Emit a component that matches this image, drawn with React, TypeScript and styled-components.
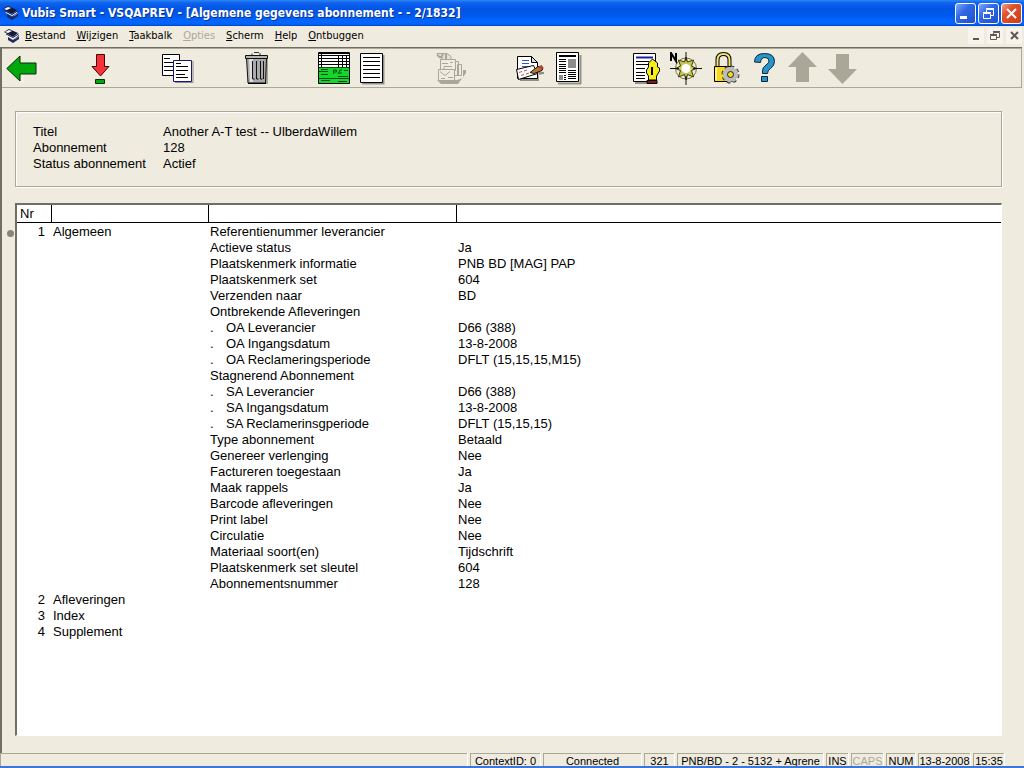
import React from 'react';
import styled, { createGlobalStyle } from 'styled-components';

const face = '#efebde';
const shade = '#aca899';

const Global = createGlobalStyle`
  *, *::before, *::after { box-sizing: border-box; }
  body { margin: 0; background: ${face}; font-family: "Liberation Sans", Arial, sans-serif; font-size: 13px; line-height: 16px; color: #000; }
  button { font: inherit; color: inherit; }
`;

const Window = styled.div`
  display: flex;
  flex-direction: column;
  min-height: 100vh;
  background: ${face};
`;

const TitleBar = styled.header`
  display: flex;
  align-items: center;
  height: 26px;
  padding: 0 2px 0 3px;
  gap: 3px;
  background: linear-gradient(#2a86f8 0, #0f62ee 3px, #0054e3 9px, #0058ee 15px, #0366ff 21px, #0264fa 24px, #0042c8 26px);
`;

const Title = styled.h1`
  flex: 1;
  margin: 0;
  font: bold 12px/20px "DejaVu Sans Condensed", Tahoma, sans-serif;
  color: #fff;
  text-shadow: 1px 1px #0a318c;
  white-space: nowrap;
`;

const TitleButtons = styled.div`
  display: flex;
  gap: 2px;
`;

const TitleButton = styled.button<{ $close?: boolean }>`
  width: 21px;
  height: 21px;
  padding: 0;
  border: 1px solid #fff;
  border-radius: 3px;
  background: ${p => (p.$close ? 'linear-gradient(135deg, #f0a088, #e2502c 35%, #c8401c)' : 'linear-gradient(135deg, #7fa8f8, #3168e4 40%, #1e50cc)')};
  svg { display: block; }
`;

const MenuBar = styled.nav`
  display: flex;
  align-items: center;
  height: 21px;
  padding: 0 2px 2px 4px;
`;

const MenuList = styled.div`
  display: flex;
  flex: 1;
  gap: 11px;
  padding-left: 5px;
`;

const MenuItem = styled.button`
  padding: 0;
  border: 0;
  background: none;
  font: 11px/16px "DejaVu Sans Condensed", Tahoma, sans-serif;
  &:disabled { color: ${shade}; }
`;

const ChildButton = styled.button`
  width: 16px;
  height: 16px;
  margin-left: 3px;
  padding: 0;
  border: 0;
  background: #f6f4ec;
  svg { display: block; }
`;

const Frame = styled.main`
  display: flex;
  flex-direction: column;
  flex: 1;
  border: solid #716f64;
  border-width: 1px 0 0 2px;
  margin-right: 2px;
`;

const Toolbar = styled.div`
  display: grid;
  grid-template-columns: repeat(22, 39px);
  height: 40px;
  padding-left: 1px;
  border: 1px solid ${shade};
  border-left: 0;
`;

const Tool = styled.button<{ $slot: number }>`
  grid-row: 1;
  grid-column: ${p => p.$slot};
  padding: 3px;
  border: 0;
  background: none;
  svg { display: block; }
`;

const Summary = styled.section`
  margin: 23px 20px 0 13px;
  padding: 12px 17px 14px;
  border: 1px solid ${shade};
  box-shadow: 1px 1px #fff, inset 1px 1px #fff;
`;

const Facts = styled.dl`
  display: grid;
  grid-template-columns: 130px 1fr;
  margin: 0;
  min-height: 48px;
  dt, dd { margin: 0; }
`;

const Body = styled.div`
  display: flex;
  flex: 1;
  margin: 16px 20px 17px 0;
`;

const Gutter = styled.div`
  width: 13px;
  padding: 27px 0 0 5px;
`;

const Marker = styled.div`
  width: 7px;
  height: 7px;
  border-radius: 50%;
  background: #87857a;
`;

const List = styled.div`
  flex: 1;
  background: #fff;
  border: solid #716f64;
  border-width: 2px 1px 1px 2px;
  border-right-color: #fff;
  border-bottom-color: #fff;
`;

const Table = styled.table`
  width: 100%;
  table-layout: fixed;
  border-collapse: separate;
  border-spacing: 0;
  tbody::before { content: ""; display: table-row; height: 1px; }
`;

const Head = styled.th<{ $width?: number }>`
  width: ${p => (p.$width ? `${p.$width}px` : 'auto')};
  height: 18px;
  padding: 0 3px;
  border-bottom: 1px solid #000;
  border-right: ${p => (p.$width ? '1px solid #000' : '0')};
  font-weight: normal;
  text-align: left;
`;

const Cell = styled.td<{ $number?: boolean }>`
  height: 16px;
  padding: ${p => (p.$number ? '0 7px 0 0' : '0 1px')};
  text-align: ${p => (p.$number ? 'right' : 'left')};
  white-space: nowrap;
`;

const Sub = styled.span`
  display: inline-block;
  width: 16px;
`;

const StatusBar = styled.footer`
  display: flex;
  gap: 3px;
  height: 15px;
  padding-right: 20px;
  border-bottom: 2px solid #3b77d8;
  font-size: 11px;
  line-height: 14px;
  overflow: hidden;
`;

const StatusCell = styled.div<{ $width?: number; $off?: boolean }>`
  flex: ${p => (p.$width ? `0 0 ${p.$width}px` : '1 1 0')};
  border: solid ${shade};
  border-width: 1px 0 0 1px;
  box-shadow: 1px 0 #fff;
  color: ${p => (p.$off ? shade : '#000')};
  text-align: center;
  white-space: nowrap;
`;

const AppIcon = () => (
  <svg width="16" height="16" viewBox="0 0 16 16">
    <path d="M0 4l5-3 9 4-5 4z" fill="#161a3c" />
    <path d="M1 4l4-2 3 1-4 2z" fill="#fff" />
    <path d="M2 6l7 3 5-3v2l-5 3-6-3z" fill="#f4f6fc" />
    <path d="M2 6l7 3.500L14.500 6" fill="none" stroke="#161a3c" />
    <path d="M4 9l5 3 6-5v4l-6 4-5-3z" fill="#20285c" />
    <path d="M11 11l4-3" stroke="#7c98e0" />
  </svg>
);

const lines = (x1: number, x2: number, ys: number[]) => ys.map(y => `M${x1} ${y}H${x2}`).join('');

const icons: Record<string, React.ReactNode> = {
  back: (
    <>
      <path d="M17 31V22H33V12" fill="none" stroke="#fff" strokeOpacity=".6" />
      <path d="M.8 16.500L14 4v7h16v11H14v7z" fill="#00a80c" stroke="#042d04" />
    </>
  ),
  download: (
    <>
      <path d="M12.500 2.500h8v12h4.500L16.500 24 8 14.500h4.500z" fill="#f83038" stroke="#3a0808" />
      <path d="M11.500 27.500h9v4h-9z" fill="#00a80c" stroke="#042d04" />
    </>
  ),
  copy: (
    <>
      <path d="M.500 2.500h17v21H.500z" fill="#fff" stroke="#000" />
      <path d={lines(2, 8, [6.5]) + lines(2, 14, [10.5, 14.5, 18.5])} stroke="#000" />
      <path d="M13 30.500h18V9" fill="none" stroke="#8d8b96" />
      <path d="M11.500 8.500h18v21h-18z" fill="#fff" stroke="#18186c" />
      <path d={lines(14, 19, [11.5]) + lines(14, 26, [14.5, 18.5, 25.5]) + lines(14, 23, [22.5])} stroke="#000" />
    </>
  ),
  trash: (
    <>
      <path d="M27 6v25H9" fill="none" stroke="#aaa79a" strokeWidth="2" />
      <path d="M6.500 6h20l-1 25H8z" fill="#aaa" stroke="#111" />
      <path d="M9 7h4v23h-3z" fill="#ddd" />
      <path d="M12.500 9v18M12.500 27h2M16.500 9v18M16.500 27h2M20.500 9v18M20.500 27h2M23.500 9v18" fill="none" stroke="#111" />
      <path d="M5.500 3.500h22v3h-22z" fill="#b6b6b6" stroke="#111" />
      <path d="M12 3V1.500M14 .500h5M20 1v2" stroke="#333" fill="none" />
      <path d="M8 31.500h18" stroke="#000" />
    </>
  ),
  grid: (
    <>
      <path d="M.500.500h31v15H.500z" fill="#fff" />
      <path d="M.500 15.500h31v16H.500z" fill="#14d62c" />
      <path d={lines(1, 31, [3.5, 6.5, 9.5, 12.5]) + 'M3.500 1v14M20.500 3v12M24.500 3v12M28.500 3v12M1 1.500h30'} stroke="#000" />
      <path d={lines(1, 31, [15.5, 26.5]) + lines(1, 10, [19.5]) + lines(3, 10, [17.5, 22.5]) + lines(20, 30, [24.5]) + lines(3, 12, [28.5]) + lines(20, 29, [29.5])} stroke="#064d0c" />
      <path d="M15.500 22v-4h3v2h-3M20 22l2-4h2M21 21h3M26 18.500h4" fill="none" stroke="#064d0c" />
      <path d="M.500.500h31v31H.500z" fill="none" stroke="#000" />
    </>
  ),
  list: (
    <>
      <path d="M5 31.500h21.500V3" fill="none" stroke="#96948a" strokeWidth="2" />
      <path d="M3.500 1.500h22v29h-22z" fill="#fff" stroke="#000" />
      <path d={lines(6, 23, [5.5, 9.5, 13.5, 17.5, 21.5, 25.5])} stroke="#000" />
    </>
  ),
  cards: (
    <>
      <path d="M2 28l4 4h17l8-11v-3h-3v8l-6 2z" fill="#aaa799" />
      <path d="M2 1.500h10l4 3v4H7V5H4z" fill="#e5e2d5" stroke="#aaa799" />
      <path d="M2 3l4 3M8 2l-2 4M11 2v5" stroke="#aaa799" strokeWidth="2" />
      <path d="M22.500 12.500h4v11h-4zM18.500 9.500h5v14h-5z" fill="#efebde" stroke="#aaa799" />
      <path d="M5.500 7.500h15v11h-15z" fill="#efebde" stroke="#aaa799" />
      <path d="M3.500 17.500h16v11h-16z" fill="#efebde" stroke="#aaa799" />
      <path d="M7 11.500h6M15 10.500h3M9 14.500h8M5 19.500l5 4 5-4M6 26.500h4M13 25.500h5M9 15v3" fill="none" stroke="#aaa799" />
    </>
  ),
  edit: (
    <>
      <path d="M7 27h17v-4l7-1v-2h-4l-2-5 1 14H7z" fill="#8f8d85" />
      <path d="M4.500 4.500h14l6 6v16h-20z" fill="#fff" stroke="#000" />
      <path d="M18.500 4.500v6h6z" fill="#ddd" stroke="#000" />
      <path d={lines(9, 16, [8.5, 11.5, 14.5])} stroke="#4054b8" />
      <path d="M3.500 17.500l17-4 4 8-19 6z" fill="#fff" stroke="#000" />
      <path d="M6 20.500l3-1M8 23.500l3-1M11 19l3-1M13 22l3-1" stroke="#d44860" />
      <path d="M17 20.500l8-6 5 1-1 3-8 3z" fill="#b8783c" stroke="#201008" />
      <path d="M26 14l3-1 1 3-2 2z" fill="#c04030" />
    </>
  ),
  news: (
    <>
      <path d="M6 31.500h22.500V3" fill="none" stroke="#96948a" strokeWidth="2" />
      <path d="M4.500.500h22v29h-22z" fill="#fff" stroke="#000" />
      <path d="M7 4h17" stroke="#000" strokeWidth="2" />
      <path d={lines(7, 14, [7.5, 9.5, 12.5, 14.5, 16.5, 18.5, 20.5]) + lines(16, 24, [18.5, 20.5, 22.5, 24.5, 26.5]) + lines(12, 14, [23.5, 25.5, 27.5])} stroke="#000" />
      <path d="M16 7h8v9h-8zM7 23h4v5H7z" fill="#8c8c8c" />
    </>
  ),
  compose: (
    <>
      <path d="M5 31h18" stroke="#96948a" strokeWidth="2" />
      <path d="M3.500 1.500h22v28h-22z" fill="#fff" stroke="#000" />
      <path d="M6 5.500h17" stroke="#1c20a8" strokeWidth="2" />
      <path d={lines(6, 19, [9.5, 12.5]) + lines(6, 15, [16.5, 20.5, 23.5, 26.5])} stroke="#000" />
      <path d="M22.500 7l-4 4v4l-2 3v3l2 3v4h8v-4l3-5v-3l-2-1v-4z" fill="#f6ec18" stroke="#000" />
      <path d="M17 28.500h10v3H17z" fill="#801818" stroke="#000" />
      <path d="M22 15v8" stroke="#000" strokeWidth="2" />
    </>
  ),
  compass: (
    <>
      <circle cx="17" cy="16.500" r="10.500" fill="none" stroke="#77773a" />
      <path d="M17 5l1.500 5 6-2-2 6 5 2.500-5 2 2 6.500-6-2.500L17 28l-1.500-5.500-6 2.500 2-6.500-5-2 5-2.500-2-6 6 2z" fill="#c8c850" stroke="#3a3a14" />
      <path d="M17 0v9M17 24v9M1 16.500h9M24 16.500h9" stroke="#111" />
      <circle cx="17" cy="16.500" r="4.500" fill="#fff" />
      <path d="M2 9V1l5 8V1" fill="none" stroke="#000" strokeWidth="2" />
    </>
  ),
  lock: (
    <>
      <path d="M9.500 16V8q0-6 6-6t6 6v8" fill="none" stroke="#000" strokeWidth="4" />
      <path d="M9.500 16V8q0-6 6-6t6 6v8" fill="none" stroke="#f4e470" strokeWidth="2" />
      <path d="M6.500 14.500h18v15h-18z" fill="#f6d81c" stroke="#000" />
      <path d="M8 16v12" stroke="#fff48c" strokeWidth="2" />
      <circle cx="22.500" cy="22.500" r="7" fill="#b8b8b8" stroke="#333" strokeWidth="4" strokeDasharray="3 2.500" />
      <circle cx="22.500" cy="22.500" r="7" fill="#bcbcbc" stroke="#bcbcbc" strokeWidth="2" strokeDasharray="3 2.500" />
      <circle cx="22.500" cy="22.500" r="3" fill="#f6d81c" stroke="#222" />
    </>
  ),
  help: (
    <>
      <path d="M7.500 10q0-8.500 10-8.500t10 8q0 4-4 7-3 2-3 5h-5v-3q0-3 3.500-5.500t3-4q0-3.500-4-3.500t-4.500 5z" fill="#2894c8" stroke="#08283c" />
      <path d="M14.500 24.500h6v5h-6z" fill="#2894c8" stroke="#08283c" />
    </>
  ),
  up: <path d="M16.500 0L31 15h-8v15H10V15H2z" fill="#aaa799" />,
  down: <path d="M17.500 32L32 17h-8V2H11v15H3z" fill="#aaa799" />,
};

const tools: [string, string, number][] = [
  ['back', 'Terug', 1],
  ['download', 'Ophalen', 3],
  ['copy', 'Kopiëren', 5],
  ['trash', 'Verwijderen', 7],
  ['grid', 'Overzicht', 9],
  ['list', 'Lijst', 10],
  ['cards', 'Kaarten', 12],
  ['edit', 'Bewerken', 14],
  ['news', 'Tijdschrift', 15],
  ['compose', 'Notitie', 17],
  ['compass', 'Navigatie', 18],
  ['lock', 'Beveiliging', 19],
  ['help', 'Help', 20],
  ['up', 'Vorige', 21],
  ['down', 'Volgende', 22],
];

const menus = ['Bestand', 'Wijzigen', 'Taakbalk', 'Opties', 'Scherm', 'Help', 'Ontbuggen'];

const facts = [
  ['Titel', 'Another A-T test -- UlberdaWillem'],
  ['Abonnement', '128'],
  ['Status abonnement', 'Actief'],
];

const details: [string, string, boolean?][] = [
  ['Referentienummer leverancier', ''],
  ['Actieve status', 'Ja'],
  ['Plaatskenmerk informatie', 'PNB BD [MAG] PAP'],
  ['Plaatskenmerk set', '604'],
  ['Verzenden naar', 'BD'],
  ['Ontbrekende Afleveringen', ''],
  ['OA Leverancier', 'D66 (388)', true],
  ['OA Ingangsdatum', '13-8-2008', true],
  ['OA Reclameringsperiode', 'DFLT (15,15,15,M15)', true],
  ['Stagnerend Abonnement', ''],
  ['SA Leverancier', 'D66 (388)', true],
  ['SA Ingangsdatum', '13-8-2008', true],
  ['SA Reclamerinsgperiode', 'DFLT (15,15,15)', true],
  ['Type abonnement', 'Betaald'],
  ['Genereer verlenging', 'Nee'],
  ['Factureren toegestaan', 'Ja'],
  ['Maak rappels', 'Ja'],
  ['Barcode afleveringen', 'Nee'],
  ['Print label', 'Nee'],
  ['Circulatie', 'Nee'],
  ['Materiaal soort(en)', 'Tijdschrift'],
  ['Plaatskenmerk set sleutel', '604'],
  ['Abonnementsnummer', '128'],
];

const sections = ['Afleveringen', 'Index', 'Supplement'];

const status: [string, number, boolean?][] = [
  ['ContextID: 0', 70],
  ['Connected', 98],
  ['321', 30],
  ['PNB/BD - 2 - 5132 + Aqrene', 146],
  ['INS', 22],
  ['CAPS', 32, true],
  ['NUM', 29],
  ['13-8-2008', 52],
  ['15:35', 31],
];

export default function App() {
  return (
    <Window>
      <Global />
      <TitleBar>
        <AppIcon />
        <Title>Vubis Smart - VSQAPREV - [Algemene gegevens abonnement - - 2/1832]</Title>
        <TitleButtons>
          <TitleButton aria-label="Minimaliseren">
            <svg width="19" height="19" viewBox="0 0 19 19"><path d="M4 13.500h7" stroke="#fff" strokeWidth="3" /></svg>
          </TitleButton>
          <TitleButton aria-label="Vorig formaat">
            <svg width="19" height="19" viewBox="0 0 19 19" fill="none" stroke="#fff">
              <path d="M7.500 8V5.500h7v6H12M7 4.500h8M4.500 9.500h7v5h-7zM4 8.500h8" />
            </svg>
          </TitleButton>
          <TitleButton $close aria-label="Sluiten">
            <svg width="19" height="19" viewBox="0 0 19 19"><path d="M5 5l9 9M14 5l-9 9" stroke="#fff" strokeWidth="2" /></svg>
          </TitleButton>
        </TitleButtons>
      </TitleBar>
      <MenuBar>
        <AppIcon />
        <MenuList>
          {menus.map(m => (
            <MenuItem key={m} disabled={m === 'Opties'}><u>{m[0]}</u>{m.slice(1)}</MenuItem>
          ))}
        </MenuList>
        <ChildButton aria-label="Venster minimaliseren">
          <svg width="16" height="16" viewBox="0 0 16 16"><path d="M5 11h6" stroke="#5c5a50" strokeWidth="2" /></svg>
        </ChildButton>
        <ChildButton aria-label="Venster vorig formaat">
          <svg width="16" height="16" viewBox="0 0 16 16" fill="none" stroke="#5c5a50">
            <path d="M6.500 6V4.500h6v5H10M6 3.500h7M3.500 7.500h6v4h-6zM3 6.500h7" />
          </svg>
        </ChildButton>
        <ChildButton aria-label="Venster sluiten">
          <svg width="16" height="16" viewBox="0 0 16 16"><path d="M5 4l7 7M12 4l-7 7" stroke="#5c5a50" strokeWidth="2" /></svg>
        </ChildButton>
      </MenuBar>
      <Frame>
        <Toolbar role="toolbar">
          {tools.map(([id, label, slot]) => (
            <Tool key={id} $slot={slot} aria-label={label}>
              <svg width="33" height="33" viewBox="0 0 33 33">{icons[id]}</svg>
            </Tool>
          ))}
        </Toolbar>
        <Summary>
          <Facts>
            {facts.map(([k, v]) => (
              <React.Fragment key={k}><dt>{k}</dt><dd>{v}</dd></React.Fragment>
            ))}
          </Facts>
        </Summary>
        <Body>
          <Gutter><Marker /></Gutter>
          <List>
            <Table>
              <thead>
                <tr>
                  <Head $width={35}>Nr</Head>
                  <Head $width={157} />
                  <Head $width={248} />
                  <Head />
                </tr>
              </thead>
              <tbody>
                {details.map(([k, v, sub], i) => (
                  <tr key={k}>
                    <Cell $number>{i === 0 ? 1 : ''}</Cell>
                    <Cell>{i === 0 ? 'Algemeen' : ''}</Cell>
                    <Cell>{sub && <Sub>.</Sub>}{k}</Cell>
                    <Cell>{v}</Cell>
                  </tr>
                ))}
                {sections.map((s, i) => (
                  <tr key={s}>
                    <Cell $number>{i + 2}</Cell>
                    <Cell>{s}</Cell>
                    <Cell />
                    <Cell />
                  </tr>
                ))}
              </tbody>
            </Table>
          </List>
        </Body>
      </Frame>
      <StatusBar>
        <StatusCell />
        {status.map(([text, width, off]) => (
          <StatusCell key={text} $width={width} $off={off}>{text}</StatusCell>
        ))}
      </StatusBar>
    </Window>
  );
}
